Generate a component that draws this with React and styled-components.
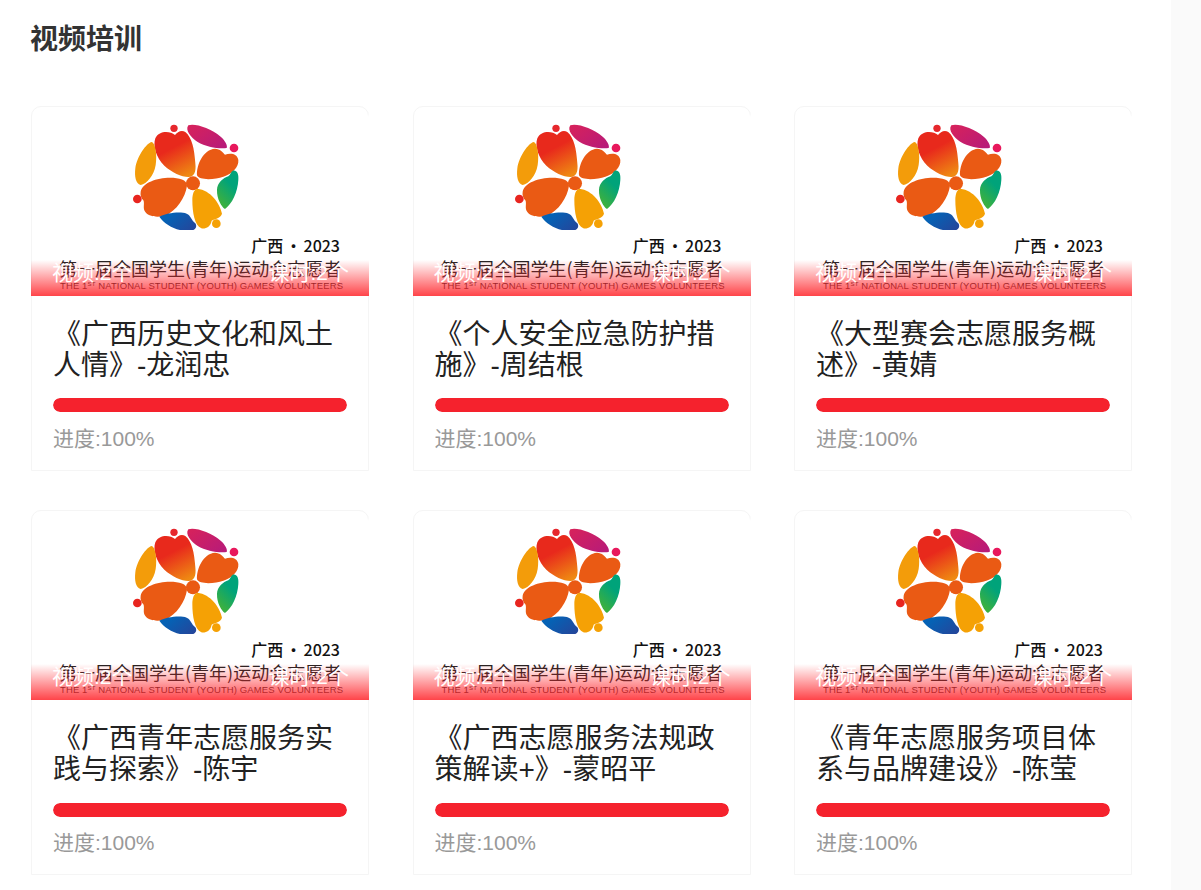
import styled, { createGlobalStyle } from "styled-components";

const courses = [
  "《广西历史文化和风土人情》-龙润忠",
  "《个人安全应急防护措施》-周结根",
  "《大型赛会志愿服务概述》-黄婧",
  "《广西青年志愿服务实践与探索》-陈宇",
  "《广西志愿服务法规政策解读+》-蒙昭平",
  "《青年志愿服务项目体系与品牌建设》-陈莹",
];

const GlobalStyle = createGlobalStyle`
  html, body {
    margin: 0;
    padding: 0;
    background: #fff;
    overflow: hidden;
  }

  body {
    font-family: "Liberation Sans", "Noto Sans CJK SC", sans-serif;
  }
`;

const Page = styled.div`
  display: flex;
  height: 890px;
  overflow: hidden;
`;

const Main = styled.main`
  width: 1171px;
  flex: none;
  padding: 21px 0 0 31px;
  box-sizing: border-box;
`;

const Rail = styled.div`
  flex: 1;
  background: #fafafa;
`;

const Heading = styled.h2`
  margin: 0 0 47px -1px;
  font-size: 28px;
  line-height: 38px;
  font-weight: 700;
  color: #333;
`;

const Grid = styled.div`
  display: grid;
  grid-template-columns: repeat(3, 338px);
  column-gap: 43.5px;
  row-gap: 39.2px;
`;

const Card = styled.article`
  height: 365px;
  box-sizing: border-box;
  border: 1px solid #f5f5f5;
  border-radius: 10px 10px 0 0;
`;

/* the picture hangs over the card border, it hides the right edge only */
const Cover = styled.div`
  position: relative;
  height: 189px;
  margin: 0 -1px;
  border-radius: 10px 10px 0 0;
  overflow: hidden;
  display: flex;
  flex-direction: column;
  background: linear-gradient(to left, #fff 1px, transparent 1px);
`;

const Logo = styled.svg`
  display: block;
  width: 130px;
  height: 115px;
  margin: 8px 0 0 89px;
  flex: none;
`;

const Year = styled.div`
  margin: 7px 29px 0 0;
  text-align: right;
  font-family: "Noto Sans CJK SC", sans-serif;
  font-size: 16px;
  font-weight: 500;
  line-height: 16px;
  word-spacing: -1.5px;
  color: #111;
`;

const Slogan = styled.div`
  margin: 5px 0 0 28px;
  font-family: "Noto Sans CJK SC", sans-serif;
  font-size: 18px;
  line-height: 20px;
  color: #222;
  white-space: nowrap;
`;

const English = styled.div`
  margin: 3px 0 0 29px;
  font-size: 9.5px;
  line-height: 10px;
  letter-spacing: 0.12px;
  color: #222;
  white-space: nowrap;

  sup {
    font-size: 6px;
    line-height: 0;
    vertical-align: 3px;
  }
`;

const Band = styled.div`
  position: absolute;
  left: 0;
  right: 0;
  bottom: 0;
  height: 36px;
  padding: 0 20px 0 21px;
  display: flex;
  justify-content: space-between;
  font-size: 21px;
  line-height: 26px;
  color: #fff;
  background: linear-gradient(rgba(255, 42, 48, 0), rgba(255, 42, 48, 0.88));
`;

const Body = styled.div`
  padding: 23px 21px 0 21px;
`;

const Title = styled.h3`
  margin: 0;
  height: 63px;
  font-size: 28px;
  line-height: 31px;
  font-weight: 400;
  color: #222;
`;

const Track = styled.div`
  height: 14px;
  margin-top: 16.4px;
  border-radius: 7px;
  background: #f5f5f5;
  overflow: hidden;
`;

const Fill = styled.div`
  height: 100%;
  border-radius: 7px;
  background: #f5222d;
`;

const Progress = styled.div`
  margin-top: 13.6px;
  font-size: 21px;
  line-height: 26px;
  color: #999;
`;

function LogoMark({ id }) {
  return (
    <Logo viewBox="0 0 390 345">
      <defs>
        <linearGradient id={`${id}-top`} x1="0.35" y1="0.15" x2="0.75" y2="1">
          <stop offset="0.25" stopColor="#e8291c" />
          <stop offset="1" stopColor="#ef8a12" />
        </linearGradient>
        <linearGradient id={`${id}-pink`} x1="0" y1="0" x2="1" y2="0.8">
          <stop offset="0" stopColor="#d8225a" />
          <stop offset="1" stopColor="#b81b78" />
        </linearGradient>
        <linearGradient id={`${id}-green`} x1="0.7" y1="0.2" x2="0.3" y2="0.9">
          <stop offset="0.2" stopColor="#00a37a" />
          <stop offset="1" stopColor="#3bb040" />
        </linearGradient>
        <linearGradient id={`${id}-blue`} x1="0" y1="0.2" x2="1" y2="0.8">
          <stop offset="0.2" stopColor="#0562b5" />
          <stop offset="1" stopColor="#24469b" />
        </linearGradient>
      </defs>
      <path fill={`url(#${id}-top)`} d="M165 60C150 48 118 46 106 70C98 92 108 128 133 152C155 172 185 186 205 186C223 186 229 170 226 145C223 100 216 68 196 51C185 44 172 50 165 60Z" />
      <circle cx="162" cy="40" r="11" fill="#e6272d" />
      <path fill={`url(#${id}-pink)`} d="M205 31C225 24 272 40 302 65C314 75 324 92 320 99C300 103 258 96 233 81C213 69 194 45 205 31Z" />
      <circle cx="342" cy="99" r="13" fill="#e8185c" />
      <path fill="#ea5a14" d="M231 181C229 150 250 103 285 101C300 101 310 113 315 119C332 113 352 116 355 135C357 157 336 177 310 185C285 194 238 197 231 181Z" />
      <path fill={`url(#${id}-green)`} d="M338 167C350 164 357 175 355 195C353 232 336 267 315 282C304 276 290 250 291 225C291 204 310 189 325 184C332 179 332 171 338 167Z" />
      <circle cx="219" cy="205" r="21" fill="#ea5a14" />
      <path fill="#f39c0a" d="M95 81C106 84 112 120 107 150C102 182 80 207 62 210C47 206 43 185 46 160C51 124 80 84 95 81Z" />
      <path fill="#ea5a14" d="M62 230C68 203 110 188 150 188C177 188 202 194 201 212C196 247 170 287 135 302C115 307 88 307 76 291C67 280 75 266 70 256C64 250 60 240 62 230Z" />
      <circle cx="52" cy="252" r="13" fill="#e8251f" />
      <path fill="#f5a105" d="M232 221C272 225 300 266 306 296C302 310 285 311 275 317C272 335 256 343 244 340C224 332 217 292 217 256C217 236 222 223 232 221Z" />
      <circle cx="289" cy="326" r="13" fill="#f5a105" />
      <path fill={`url(#${id}-blue)`} d="M118 305C140 294 180 289 200 296C213 301 213 315 226 325C233 335 226 348 205 348C175 349 135 331 118 305Z" />
    </Logo>
  );
}

function CourseCard({ title, index }) {
  return (
    <Card>
      <Cover>
        <LogoMark id={`logo${index}`} />
        <Year>广西 • 2023</Year>
        <Slogan>第一届全国学生(青年)运动会志愿者</Slogan>
        <English>
          THE 1<sup>ST</sup> NATIONAL STUDENT (YOUTH) GAMES VOLUNTEERS
        </English>
        <Band>
          <span>视频:2个</span>
          <span>课时:2个</span>
        </Band>
      </Cover>
      <Body>
        <Title>{title}</Title>
        <Track>
          <Fill style={{ width: "100%" }} />
        </Track>
        <Progress>进度:100%</Progress>
      </Body>
    </Card>
  );
}

export default function App() {
  return (
    <Page>
      <GlobalStyle />
      <Main>
        <Heading>视频培训</Heading>
        <Grid>
          {courses.map((title, i) => (
            <CourseCard key={title} title={title} index={i} />
          ))}
        </Grid>
      </Main>
      <Rail />
    </Page>
  );
}
